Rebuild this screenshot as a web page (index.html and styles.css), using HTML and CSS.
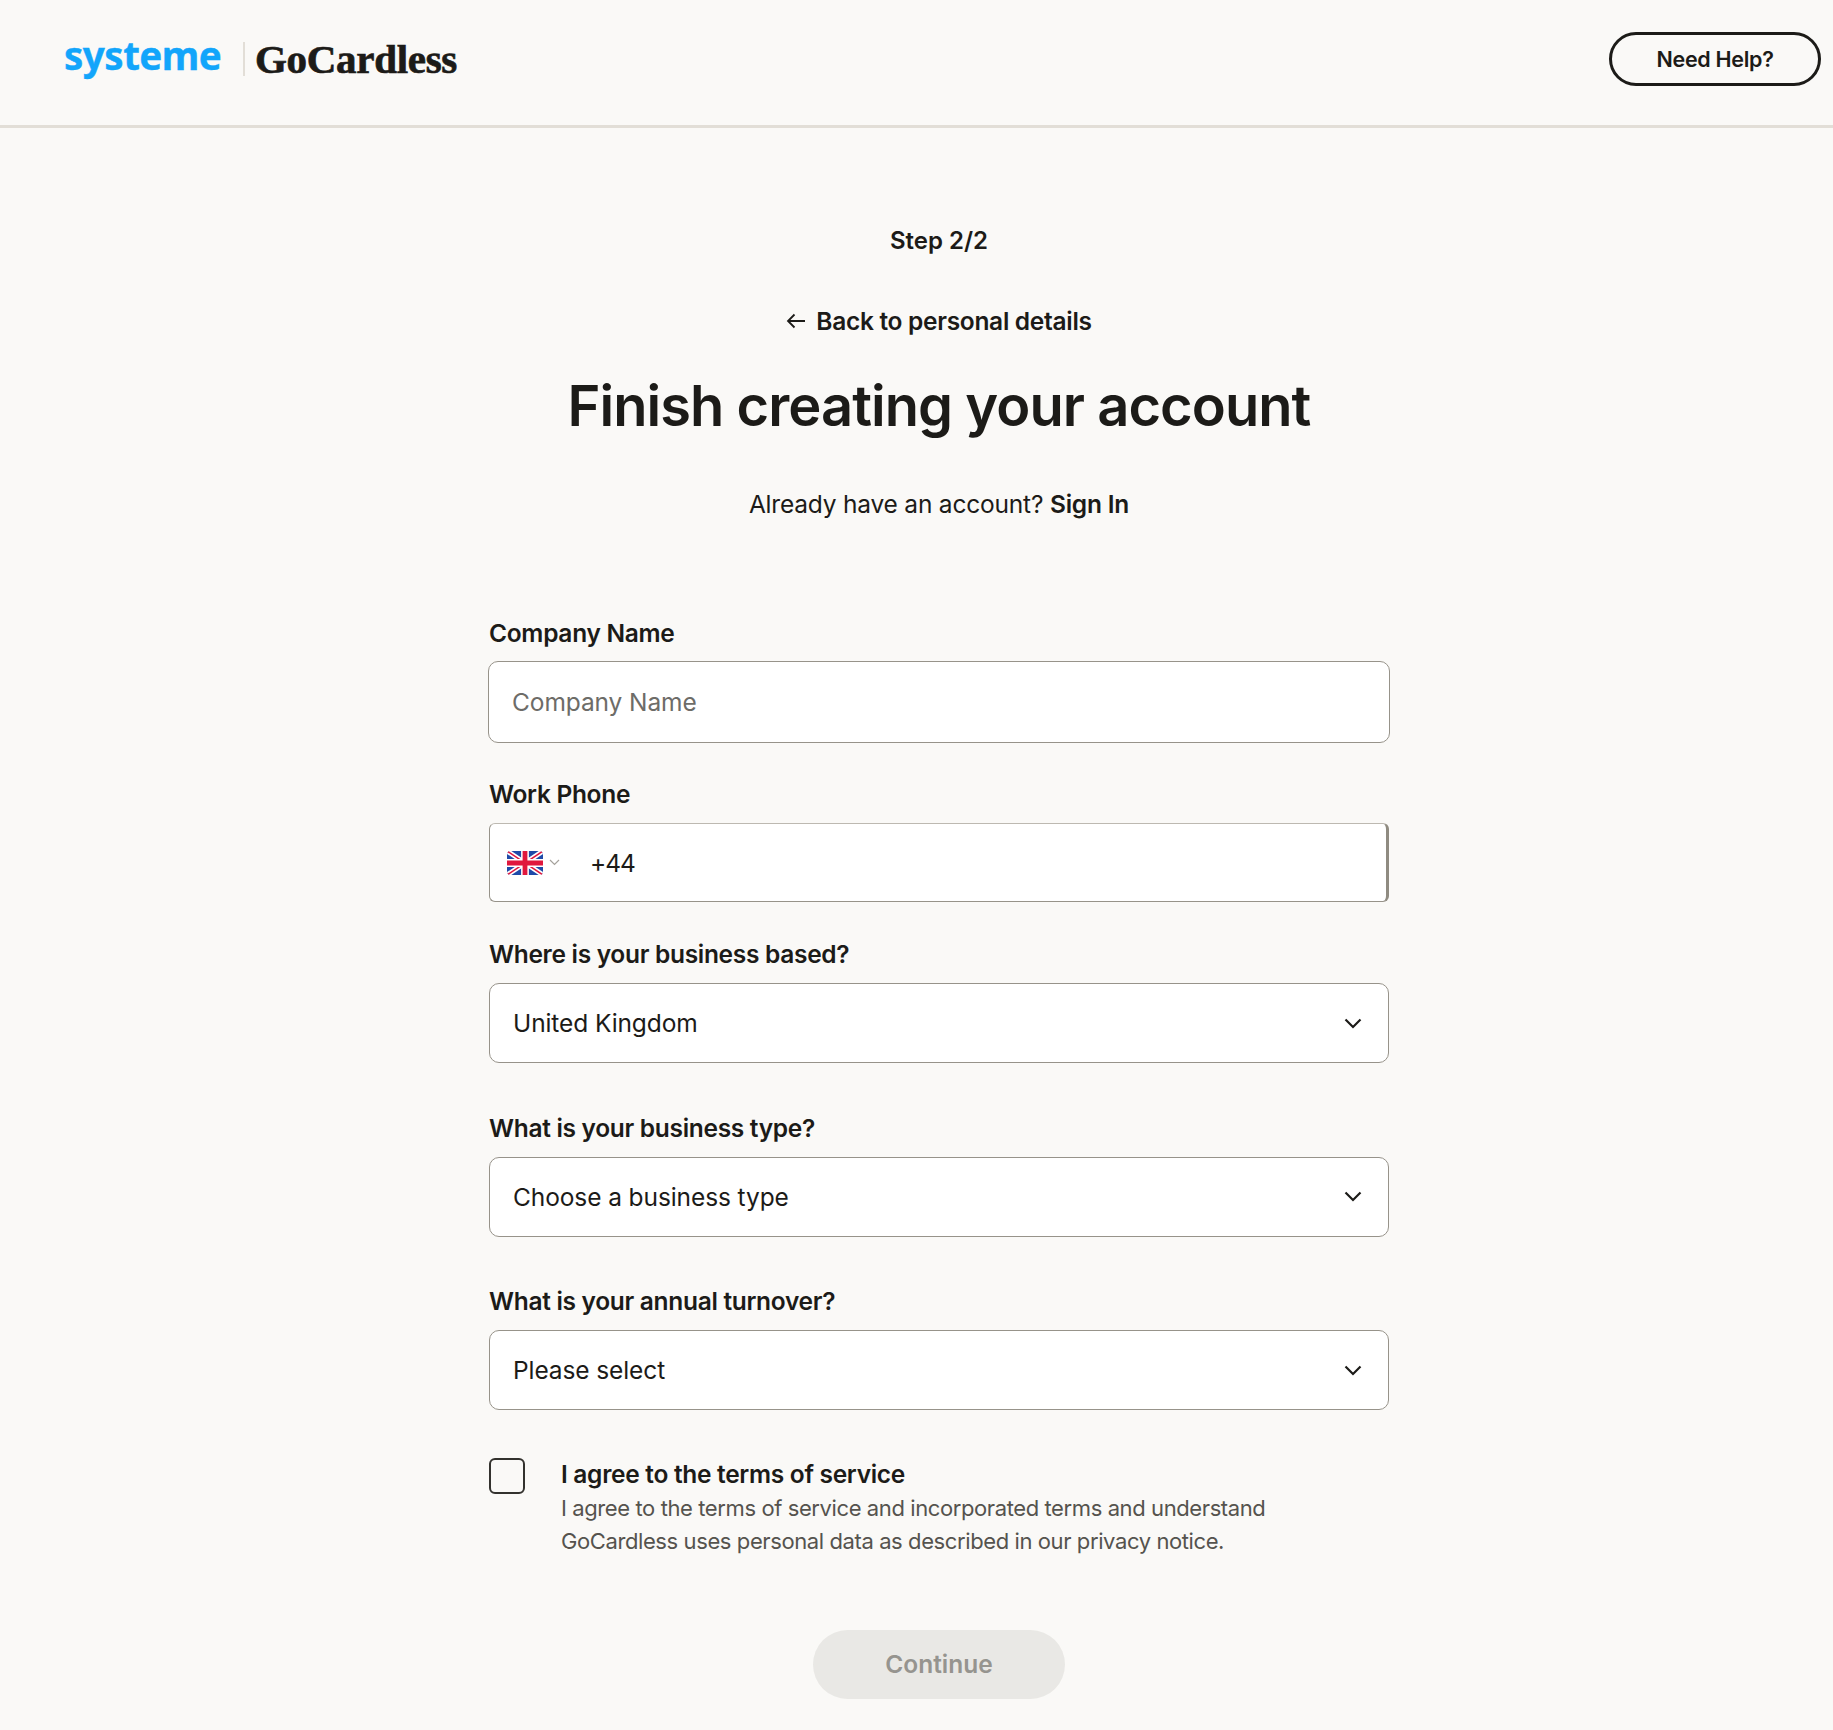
FILE: index.html
```html
<!DOCTYPE html>
<html lang="en">
<head>
    <meta charset="UTF-8">
    <meta name="viewport" content="width=device-width, initial-scale=1.0">
    <title>Finish creating your account</title>
    <link rel="stylesheet" href="styles.css">
</head>
<body>
    <header class="site-header">
        <div class="logos">
            <span class="logo-systeme">systeme</span>
            <span class="logo-divider"></span>
            <span class="logo-gocardless">GoCardless</span>
        </div>
        <a class="help-btn" href="#">Need Help?</a>
    </header>

    <main class="signup">
        <p class="step">Step 2/2</p>
        <a class="back-link" href="#">
            <svg width="20" height="16" viewBox="0 0 20 16" fill="none" stroke="#1c1b18" stroke-width="1.8">
                <path d="M19 8H2M8.500 1.500L2 8l6.500 6.500"/>
            </svg>
            Back to personal details
        </a>
        <h1 class="title">Finish creating your account</h1>
        <p class="signin">Already have an account? <a href="#">Sign In</a></p>

        <form class="signup-form">
            <div class="field field-company">
                <label class="field-label">Company Name</label>
                <div class="input input-company"><span class="placeholder">Company Name</span></div>
            </div>

            <div class="field field-phone">
                <label class="field-label">Work Phone</label>
                <div class="input input-phone">
                    <div class="flag-select">
                        <svg class="flag" width="36" height="24" viewBox="0 0 60 40">
                            <defs><clipPath id="flag-clip"><rect width="60" height="40" rx="6"/></clipPath></defs>
                            <g clip-path="url(#flag-clip)">
                                <rect width="60" height="40" fill="#1f4aa8"/>
                                <path d="M0 0L60 40M60 0L0 40" stroke="#fff" stroke-width="8"/>
                                <path d="M0 0L60 40M60 0L0 40" stroke="#e0173d" stroke-width="2.500"/>
                                <path d="M30 0V40M0 20H60" stroke="#fff" stroke-width="13"/>
                                <path d="M30 0V40M0 20H60" stroke="#e0173d" stroke-width="8"/>
                            </g>
                        </svg>
                        <svg class="flag-caret" width="11" height="7" viewBox="0 0 11 7" fill="none" stroke="#a5a29c" stroke-width="1.200">
                            <path d="M1 1l4.500 4.500L10 1"/>
                        </svg>
                    </div>
                    <span class="phone-code">+44</span>
                </div>
            </div>

            <div class="field field-select">
                <label class="field-label">Where is your business based?</label>
                <div class="input input-select">
                    <span>United Kingdom</span>
                    <svg class="chevron" width="18" height="11" viewBox="0 0 18 11" fill="none" stroke="#1c1b18" stroke-width="2.200">
                        <path d="M1.500 1.500L9 9l7.500-7.500"/>
                    </svg>
                </div>
            </div>

            <div class="field field-select">
                <label class="field-label">What is your business type?</label>
                <div class="input input-select">
                    <span>Choose a business type</span>
                    <svg class="chevron" width="18" height="11" viewBox="0 0 18 11" fill="none" stroke="#1c1b18" stroke-width="2.200">
                        <path d="M1.500 1.500L9 9l7.500-7.500"/>
                    </svg>
                </div>
            </div>

            <div class="field field-select">
                <label class="field-label">What is your annual turnover?</label>
                <div class="input input-select">
                    <span>Please select</span>
                    <svg class="chevron" width="18" height="11" viewBox="0 0 18 11" fill="none" stroke="#1c1b18" stroke-width="2.200">
                        <path d="M1.500 1.500L9 9l7.500-7.500"/>
                    </svg>
                </div>
            </div>

            <div class="terms">
                <span class="checkbox"></span>
                <div class="terms-text">
                    <p class="terms-title">I agree to the terms of service</p>
                    <p class="terms-desc">I agree to the terms of service and incorporated terms and understand GoCardless uses personal data as described in our privacy notice.</p>
                </div>
            </div>

            <button class="continue-btn" type="button">Continue</button>
        </form>
    </main>
</body>
</html>
```

FILE: styles.css
```css
* {
    margin: 0;
    padding: 0;
    box-sizing: border-box;
}

body {
    font-family: 'Inter', 'Liberation Sans', sans-serif;
    background: #faf9f7;
    color: #1c1b18;
    min-height: 1730px;
}

a {
    color: inherit;
    text-decoration: none;
}

.site-header {
    height: 128px;
    display: flex;
    align-items: center;
    justify-content: space-between;
    padding: 0 12px 8px 64px;
    border-bottom: 3px solid #e2ded7;
}

.logos {
    display: flex;
    align-items: center;
}

.logo-systeme {
    font-family: 'Noto Sans', sans-serif;
    font-size: 38.500px;
    font-weight: 700;
    color: #12a5fb;
    -webkit-text-stroke: 0.4px #12a5fb;
    letter-spacing: -0.5px;
    line-height: 1;
    width: 179px;
    margin-top: -7px;
}

.logo-divider {
    width: 2px;
    height: 34px;
    background: #e2ded7;
}

.logo-gocardless {
    font-family: 'Liberation Serif', serif;
    font-size: 41px;
    font-weight: 700;
    -webkit-text-stroke: 0.7px #1c1b18;
    letter-spacing: -0.3px;
    line-height: 1;
    margin-left: 10px;
    margin-top: 2px;
}

.help-btn {
    width: 212px;
    height: 54px;
    display: flex;
    align-items: center;
    justify-content: center;
    border: 3px solid #1c1b18;
    border-radius: 27px;
    font-size: 21.500px;
    font-weight: 600;
    letter-spacing: -0.3px;
}

.signup {
    display: flex;
    flex-direction: column;
    align-items: center;
    padding: 99px 0 30px 45px;
}

.step {
    font-size: 24px;
    font-weight: 600;
    line-height: 28px;
}

.back-link {
    display: flex;
    align-items: center;
    gap: 10px;
    margin-top: 52px;
    font-size: 24.500px;
    font-weight: 600;
    letter-spacing: -0.3px;
    line-height: 28px;
}

.title {
    margin-top: 36px;
    font-size: 56px;
    font-weight: 600;
    letter-spacing: -0.950px;
    line-height: 70px;
}

.signin {
    margin-top: 48px;
    font-size: 24.500px;
    line-height: 30px;
    letter-spacing: -0.2px;
}

.signin a {
    font-weight: 600;
}

.signup-form {
    width: 900px;
    margin-top: 99px;
    display: flex;
    flex-direction: column;
}

.field-label {
    display: block;
    font-size: 24.500px;
    font-weight: 600;
    letter-spacing: -0.3px;
    line-height: 30px;
}

.input {
    display: flex;
    align-items: center;
    background: #fff;
    border: 1.500px solid #97938a;
    border-radius: 10px;
    font-size: 24.500px;
    letter-spacing: -0.1px;
}

.input-company {
    height: 82px;
    margin: 13px -1px 0;
    padding: 0 23px;
}

.placeholder {
    color: #6d6c68;
}

.field-phone {
    margin-top: 36px;
}

.input-phone {
    height: 79px;
    margin-top: 14px;
    border-radius: 6px;
    border-top-color: #bdb9b1;
    border-right: 3px solid #8f8b81;
}

.flag-select {
    width: 79px;
    height: 100%;
    display: flex;
    align-items: center;
    gap: 6px;
    padding-left: 17px;
}

.phone-code {
    margin-left: 21px;
    letter-spacing: -1px;
}

.field-select {
    margin-top: 49.700px;
}

.field-phone + .field-select {
    margin-top: 37px;
}

.field-select .field-label {
    margin-bottom: 14px;
}

.input-select {
    height: 80px;
    justify-content: space-between;
    padding: 0 26px 0 23px;
}

.terms {
    display: flex;
    margin-top: 48px;
}

.checkbox {
    flex: none;
    width: 36px;
    height: 36px;
    border: 2px solid #33322e;
    border-radius: 6px;
    margin-right: 36px;
}

.terms-title {
    font-size: 24.500px;
    font-weight: 600;
    letter-spacing: -0.3px;
    line-height: 33.900px;
}

.terms-desc {
    font-size: 22px;
    line-height: 33px;
    letter-spacing: -0.4px;
    color: #55534e;
    max-width: 760px;
}

.continue-btn {
    align-self: center;
    width: 252px;
    height: 69px;
    margin-top: 71.500px;
    border: 0;
    border-radius: 35px;
    background: #e9e8e5;
    color: #96948f;
    font-family: inherit;
    font-size: 24.500px;
    font-weight: 600;
}
```
